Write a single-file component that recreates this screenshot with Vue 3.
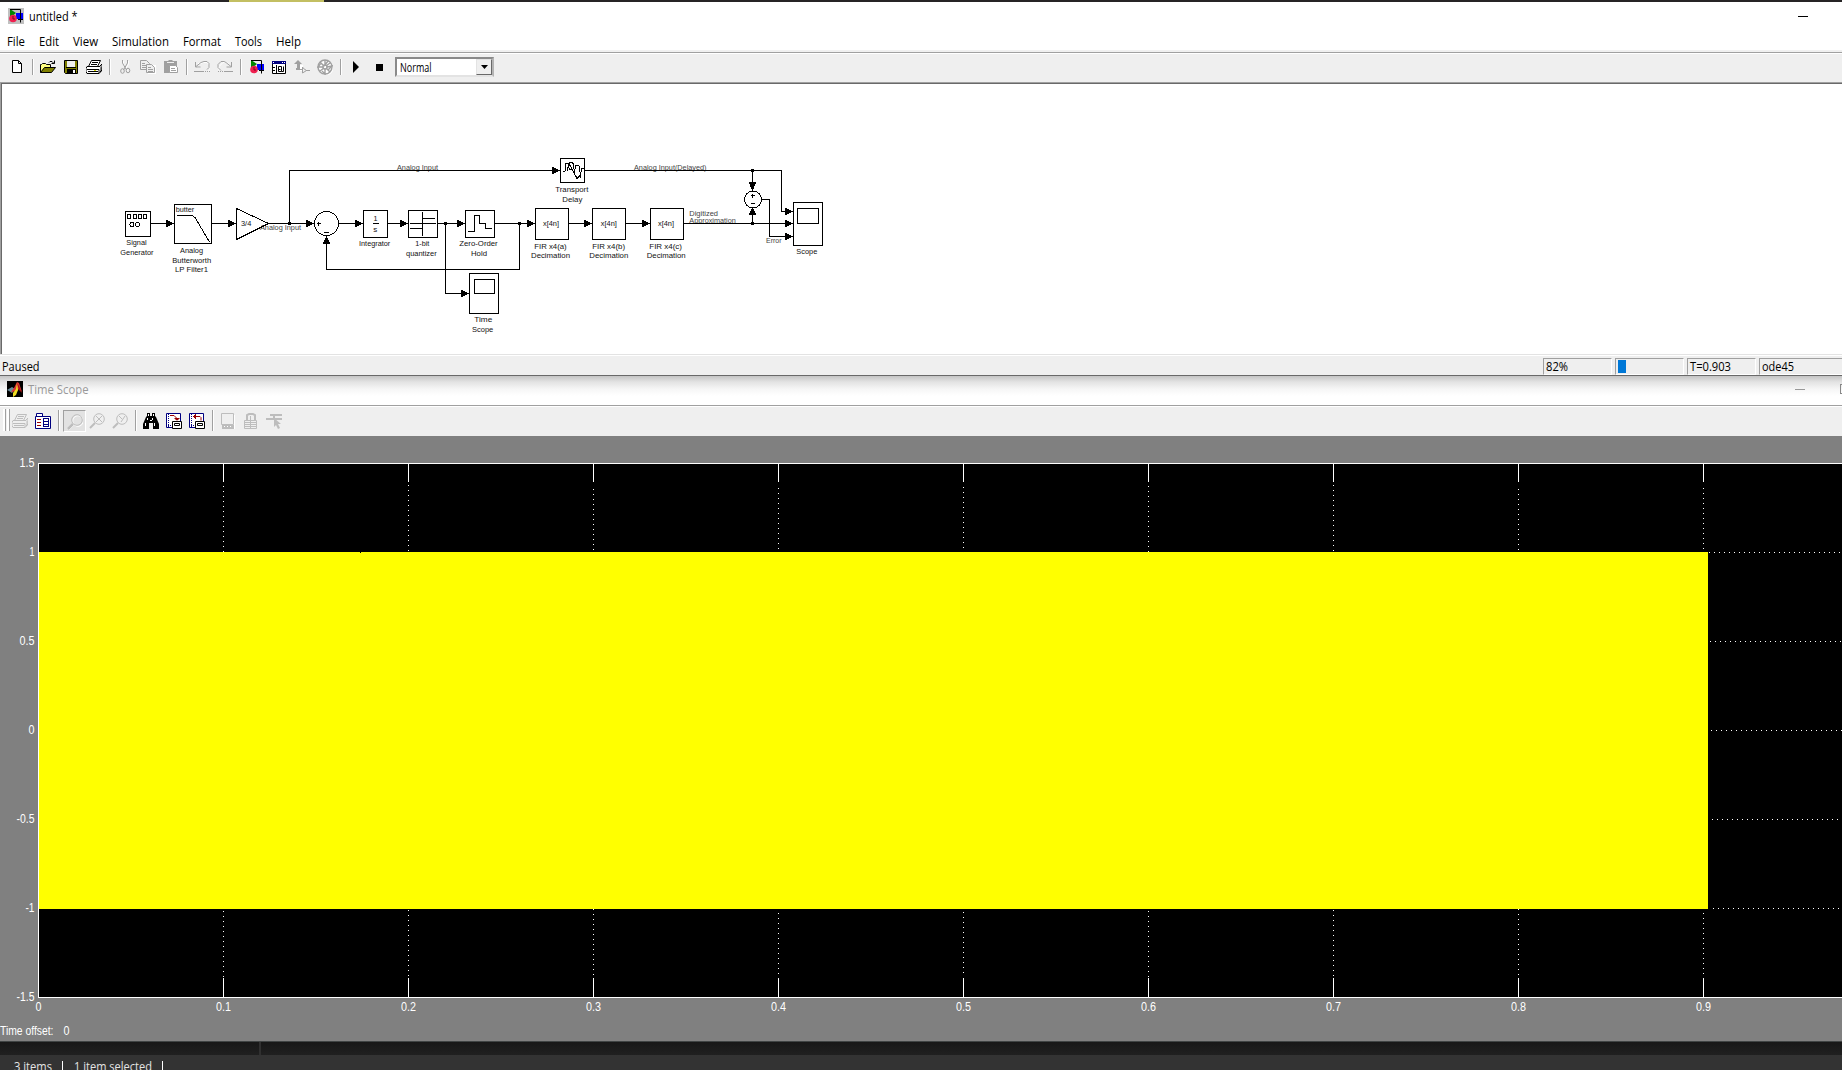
<script setup>
import { h } from 'vue'

// Text run set to an exact advance width; y is the baseline within a 16px line
const Fit = ({ t, w, size = 12, color = '#000' }) =>
  h('svg', { width: w, height: 18, style: 'display:block;overflow:visible' }, [
    h('text', { x: 0, y: 13, textLength: w, lengthAdjust: 'spacingAndGlyphs', 'font-size': size, fill: color }, t),
  ])
Fit.props = ['t', 'w', 'size', 'color']

const menus = [
  ['File', 18, 32], ['Edit', 20, 34], ['View', 25, 39], ['Simulation', 57, 71],
  ['Format', 38, 52], ['Tools', 27, 41], ['Help', 25, 30],
]

const g = '#a0a0a0'
const l = '#bdbdbd'
const icons = {
  model: `<path fill="#080" d="M2 1v9l6-5z"/><path fill="#00f" d="M8 5h7v6h-7z"/><path stroke="#000" fill="none" d="M2 1.500h10.500v13M10 11.500h5"/><circle cx="5" cy="10.500" r="3.800" fill="#f02050"/><path stroke="#800020" fill="none" d="M5 8v3h2"/>`,
  new: `<path fill="#fff" stroke="#000" d="M3.500 1.500h6l3 3v9h-9z"/><path fill="none" stroke="#000" d="M9.500 1.500v3h3"/>`,
  open: `<path fill="#ffff80" stroke="#000" d="M.5 13.500v-8h1l1-1h3l1 1h4v3"/><path fill="#808000" stroke="#000" d="M.5 13.500l4-5h11l-4 5z"/><path fill="none" stroke="#000" d="M9 3.500l1-1h2l2 2M14.500 1.500v3h-3"/>`,
  save: `<path fill="#808000" stroke="#000" d="M1.500 1.500h13v13h-12l-1-1z"/><path fill="#efefef" d="M4 2h8v6h-8z"/><path fill="#000" d="M4 10h9v5h-9zM3 8h10v1h-10z"/><path fill="#fff" d="M10 11h2v3h-2z"/>`,
  print: `<path fill="#fff" stroke="#000" d="M5.500 1.500h9l-3 6h-9z"/><path fill="#fff" stroke="#000" d="M1 7.500h13l1 1v4l-2 2h-12l-1-2v-3z"/><path stroke="#000" fill="none" d="M6 3.500h6M5 5.500h6M1 10.500h12v4M2 12.500h10M13 8l3-3v6l-2 2"/><path fill="#dd0" d="M8 11h2v1h-2z"/>`,
  cut: `<g fill="none" stroke="#fff" transform="translate(1 1)"><path d="M5.500 1v3l4 7M10.500 1v3l-4 7"/></g><g fill="none" stroke="${g}"><path d="M5.500 1v3l4 7M10.500 1v3l-4 7"/><ellipse cx="5.500" cy="12" rx="1.800" ry="2.300"/><ellipse cx="11" cy="11.500" rx="1.800" ry="2.300"/></g>`,
  copy: `<path fill="#fff" d="M8 6h8v9h-8z"/><g fill="#efefef" stroke="${g}"><path d="M.5 1.500h6l3 3v6h-9z"/><path d="M6.500 5.500h5l3 3v5h-8z"/><path d="M2 4.500h3M2 6.500h4M2 8.500h4M8 8.500h3M8 10.500h5M8 12.500h5"/></g>`,
  paste: `<path fill="${g}" d="M1 2h4l1-1h3l1 1h4v12h-13z"/><path fill="#efefef" d="M4 3h7v1h-7z"/><path fill="#fff" stroke="${g}" d="M6.500 6.500h6l2 2v5h-8z"/><path stroke="${g}" d="M8 9.500h4M8 11.500h5"/>`,
  undo: `<path fill="none" stroke="#fff" d="M3 8.500h3M4 4.500h3l2-1h4l3 3v4l-2 2"/><path fill="none" stroke="${g}" d="M1.500 3v5h5M2 7.500l5-4 3-1h3l2 2v4l-2 2"/><path fill="none" stroke="${g}" d="M0 12.500h9"/><path fill="none" stroke="${g}" stroke-dasharray="1 1" d="M9 12.500h7"/>`,
  redo: `<path fill="none" stroke="#fff" d="M2 11.500v-4l4-4h4l4 4"/><path fill="none" stroke="${g}" d="M14.500 3v5h-5M14 7.500l-5-4-2-1h-3l-3 3v3l3 3"/><path fill="none" stroke="${g}" stroke-dasharray="1 1" d="M1 12.500h7"/><path fill="none" stroke="${g}" d="M8 12.500h8"/>`,
  browser: `<path fill="#fff" stroke="#000" d="M1.500 3.500h13v11h-13z"/><path fill="#000080" d="M1 2h14v3h-14z"/><path fill="#fff" d="M2 3h1v1h-1zM11 3h1v1h-1zM13 3h1v1h-1z"/><path fill="none" stroke="#000" d="M5.500 6v8M2 8.500h2M2 11.500h2M7.500 7.500h3v5h-3zM7.500 10.500h2M12.500 7.500v5h-2"/>`,
  up: `<path fill="#fff" d="M6 6h3v6h-3z"/><path fill="${g}" d="M4 1l4 4h-2v6h-4v-2h1v-4h-3z"/><path fill="none" stroke="${g}" d="M5 10.500h4M12 11.500h4M8.500 8v6l4-2.500-3-2z"/>`,
  debug: `<circle cx="9" cy="9" r="7" fill="#fff" stroke="#fff"/><g fill="none" stroke="${g}" stroke-width="1.400"><circle cx="8" cy="8" r="7"/><circle cx="8" cy="8" r="2"/><path d="M8 1v5l3-4M10 8l5-1-4 4M8 10v5l-3-3M6 8h-5l3-4M3 3l4 4M13 13l-4-4M3 12l4-3M13 4l-4 3"/></g>`,
  play: `<path fill="#000" d="M5 2l6 6-6 6z"/>`,
  stop: `<path fill="#000" d="M5 5h7v7h-7z"/>`,
  printOff: `<g fill="#efefef" stroke="${l}"><path d="M5.500 1.500h9l-3 6h-9z"/><path d="M1 7.500h13l1 1v4l-2 2h-12l-1-2v-3z"/><path fill="none" d="M6 3.500h6M5 5.500h6M1 10.500h12v4M2 12.500h10M13 8l3-3v6l-2 2"/></g>`,
  params: `<path fill="#fff" stroke="#000080" d="M.5 15.500v-12h1v-3h6v3h8v12z"/><path stroke="#000080" fill="none" d="M1 3.500h7M8.500 5.500h5"/><path stroke="#900" d="M2 6.500h4M2 9.500h4M2 12.500h4"/><path stroke="#000080" fill="none" d="M8.500 5v9M9 8.500h4M9 11.500h4M9 13.500h4M13.500 5v9"/>`,
  zoom: `<g fill="none" stroke="#fff" transform="translate(1 1)"><circle cx="10" cy="6" r="5.300"/><path d="M6 10l-5 5"/></g><g fill="none" stroke="${l}"><circle cx="10" cy="6" r="5.300"/><path stroke-width="2.500" d="M6 10l-5 5"/></g>`,
  zoomX: `<g fill="none" stroke="${l}"><circle cx="10" cy="6" r="5.300"/><path stroke-width="2" d="M6 10l-5 5"/><path d="M7 3l6 6M13 3l-6 6"/></g>`,
  zoomY: `<g fill="none" stroke="${l}"><circle cx="10" cy="6" r="5.300"/><path stroke-width="2" d="M6 10l-5 5"/><path d="M7 3l3 3M13 3l-4 6"/></g>`,
  find: `<path fill="#000" d="M4 0h3v3h2v-3h3v3l1 1 3 7v5h-6v-6h-4v6h-6v-5l3-7 1-1z"/><path fill="#fff" d="M5 1h1v2h-1zM10 1h1v2h-1zM4 5h1v2h-1zM9 5h1v2h-1zM2 10h1v3h-1zM11 10h1v3h-1zM7 7h2v1h-2z"/>`,
  saveAxes: `<path fill="#fff" stroke="#000080" d="M.5.5h14v14h-14z"/><path fill="none" stroke="#000080" stroke-dasharray="1 1" d="M2.500 1v13M2 12.500h12"/><path fill="none" stroke="#900" d="M4 2.500h4l3 3v2M8.500 5.500h5M9.500 6.500h3"/><path fill="#fff" stroke="#000" d="M6.500 8.500h9v7h-9z"/><path fill="none" stroke="#000" d="M8.500 10.500h5v2h-5z"/>`,
  loadAxes: `<path fill="#fff" stroke="#000080" d="M.5.5h14v14h-14z"/><path fill="none" stroke="#000080" stroke-dasharray="1 1" d="M2.500 1v13M2 12.500h12"/><path fill="none" stroke="#900" d="M4 3.500h7l1 1v3M6.500 1v5M5.500 2v3"/><path fill="#fff" stroke="#000" d="M6.500 8.500h9v7h-9z"/><path fill="none" stroke="#000" d="M8.500 10.500h5v2h-5z"/>`,
  floating: `<path fill="#fff" d="M3 2h12v14h-12z"/><path fill="#efefef" stroke="${l}" d="M1.500.5h12v11h-12z"/><path fill="${l}" d="M2 12h12v4h-12z"/><path fill="#fff" d="M4 13h1v1h-1zM7 13h1v1h-1zM10 13h1v1h-1z"/>`,
  lock: `<path fill="none" stroke="${l}" stroke-width="2" d="M4 8v-6l2-1h4l2 1v6"/><path fill="#efefef" stroke="${l}" d="M1.500 7.500h12v8h-12z"/><path stroke="${l}" d="M2 9.500h12M2 11.500h12M2 13.500h12M7.500 3v12"/>`,
  signal: `<path fill="none" stroke="${l}" stroke-width="2" d="M4 2h12M0 6h16M8 2v4"/><path fill="${l}" d="M8 5l7 6h-3l2 4-2 1-2-4-2 2z"/>`,
  matlab: `<path fill="#000" d="M0 0h16v16h-16z"/><path fill="#6a8a98" d="M0 9l5-3 3 2-3 4-3-2z"/><path fill="#d33" d="M4 11l3-4 3-6 2 1 3 9-3-3-2 2z"/><path fill="#ed2" d="M6 12l3-4 1-6 1 7-2 5-3 2z"/><path fill="#a11" d="M10 2l2 3 3 7-3-3z"/>`,
}
const mainBar = ['new', '|', 'open', 'save', 'print', '|', 'cut', 'copy', 'paste', '|', 'undo', 'redo', '|', 'model', 'browser', 'up', 'debug', '|', 'play', 'stop']
const scopeBar = ['printOff', 'params', '|', 'zoom', 'zoomX', 'zoomY', '|', 'find', 'saveAxes', 'loadAxes', '|', 'floating', 'lock', 'signal']

// Blocks: x, y, width, height
const boxes = [
  [125.5, 211.5, 25, 25], [174.5, 204.5, 37, 39], [363.5, 210.5, 24, 27], [408.5, 210.5, 29, 27],
  [465.5, 210.5, 29, 27], [469.5, 273.5, 29, 40], [535.5, 208.5, 33, 31], [592.5, 208.5, 33, 31],
  [650.5, 208.5, 33, 31], [793.5, 202.5, 29, 43], [560.5, 158.5, 24, 24],
  [474.5, 279.5, 20, 14], [797.5, 208.5, 21, 15],
]
const wires = 'M151 223.5h20M212 223.500h20M268 223.500h42M289.500 223v-52.500h270M339 223.500h20M388 223.500h16M438 223.500h22M445.500 223v70.500h20M495 223.500h36M519.500 223v46.500h-193v-30M569 223.500h20M626 223.500h20M684 223.500h105M585 170.500h196.500v41h8M752.500 170v16M752.500 223v-12M762 199.500h7.500v37h20'
const heads = [[174, 223.5], [236, 223.5], [314, 223.5], [363, 223.5], [408, 223.5], [465, 223.5], [535, 223.5], [592, 223.5], [650, 223.5], [793, 223.5], [793, 211.5], [793, 236.5], [469, 293.5], [560, 170.5]]
const dots = [[288, 222], [444, 222], [518, 222], [751, 169], [751, 222]]

// Captions: text, x, baseline, width
const captions = [
  ['butter', 175.7, 212, 18.6], ['3/4', 241, 226, 10.3],
  ['1', 373.5, 221, 4], ['s', 373.2, 232, 4],
  ['x[4n]', 543, 226, 16], ['x[4n]', 600.8, 226, 16], ['x[4n]', 658, 226, 16],
  ['Signal', 126.3, 245, 20.3], ['Generator', 120.3, 255, 33.2],
  ['Analog', 180, 253, 23], ['Butterworth', 172.3, 263, 38.8], ['LP Filter1', 175, 272, 33],
  ['Integrator', 359, 246, 31.3], ['1-bit', 415.3, 246, 14], ['quantizer', 406, 256, 30.7],
  ['Zero-Order', 459.3, 246, 38.4], ['Hold', 471, 256, 16],
  ['Time', 474.3, 322, 18], ['Scope', 472, 332, 21.3],
  ['FIR x4(a)', 534.3, 249, 32.4], ['Decimation', 531, 258, 39],
  ['FIR x4(b)', 592.3, 249, 32.7], ['Decimation', 589.3, 258, 39],
  ['FIR x4(c)', 649.3, 249, 32.7], ['Decimation', 646.7, 258, 39],
  ['Scope', 796.3, 254, 21], ['Transport', 555.3, 192, 33], ['Delay', 562.3, 202, 20],
]
const signals = [
  ['Analog Input', 260, 230, 41], ['Analog Input', 397, 170, 41], ['Analog Input(Delayed)', 634, 170, 72.5],
  ['Digitized', 689.3, 215.5, 28.7], ['Approximation', 689.3, 223, 46.5], ['Error', 766, 243, 15.5],
]

const xTicks = [1, 2, 3, 4, 5, 6, 7, 8, 9].map(n => ({ n, x: 38 + n * 185, start: 485 + (((2 - n) % 5) + 5) % 5 }))
const yTicks = [['1', 552], ['0.5', 641], ['0', 730], ['-0.5', 819], ['-1', 908]].map(([t, y], i) => ({ t, y, start: 1709 + i }))
const yLabels = [['1.5', 463, 15], ['1', 552, 5], ['0.5', 641, 15], ['0', 730, 6], ['-0.5', 819, 18], ['-1', 908, 9], ['-1.5', 997, 18]]
</script>

<template>
  <div class="desktop">
    <div class="backdrop"><i></i></div>

    <section class="window">
      <header class="title">
        <span class="app-icon"><svg width="16" height="16" v-html="icons.model" /></span>
        <Fit t="untitled *" :w="48.500" />
        <i class="minimize"></i>
      </header>
      <nav class="menu">
        <span v-for="m in menus" :key="m[0]" :style="{ width: m[2] + 'px' }"><Fit :t="m[0]" :w="m[1]" /></span>
      </nav>
      <div class="toolbar main">
        <template v-for="(b, i) in mainBar" :key="i">
          <i v-if="b === '|'" class="sep"></i>
          <span v-else class="tool" :class="{ nudge: b === 'model' }"><svg width="16" height="16" v-html="icons[b]" /></span>
        </template>
        <div class="combo">
          <Fit t="Normal" :w="31.500" />
          <span class="drop"><svg width="7" height="4"><path d="M0 0h7L3.500 4z" /></svg></span>
        </div>
      </div>

      <div class="canvas">
        <svg width="1840" height="270" viewBox="2 84 1840 270">
          <defs>
            <clipPath id="above"><path d="M2 84h1840v86h-1840zM2 171h1840v52h-1840zM250 224h100v20h-100zM750 224h100v30h-100z" /></clipPath>
          </defs>
          <g class="ink" clip-path="url(#above)">
            <text v-for="(s, i) in signals" :key="i" class="signal" :x="s[1]" :y="s[2]" :textLength="s[3]" lengthAdjust="spacingAndGlyphs">{{ s[0] }}</text>
          </g>
          <g class="ink">
            <rect v-for="(b, i) in boxes" :key="i" :x="b[0]" :y="b[1]" :width="b[2]" :height="b[3]" />
            <path :d="wires" />
            <path d="M236.500 208.500v31l32-16z" />
            <circle cx="326.500" cy="223.500" r="12" />
            <circle cx="753" cy="199.500" r="8.500" />
            <path d="M127.500 214.500h3v4h-3zM133.500 214.500h3v4h-3zM138.500 214.500h3v4h-3zM143.500 214.500h3v4h-3z" />
            <circle cx="132" cy="224.500" r="2" /><circle cx="137.500" cy="224.500" r="2" />
            <path d="M177 215.500h15l3 2 14.500 24.500" />
            <path d="M316.500 223.500h4M318.500 221.500v4M324 232.500h5M751 195.500h4M752.500 193.500v4M751 203.500h4" />
            <path d="M373 223.500h6" />
            <path d="M422.500 212v24M410 223.500h26M422 218.500h13M410 228.500h12" />
            <path d="M468 231.500h6.500v-16h5v8h6v5h6.500" />
            <path d="M563 171.500h2l1-8h3l8 15 3-3 2-7h2M567 171l2-8 3-1 2 3-1 4-3 1-2-4M574 173l2-8 3 1 2 12" />
          </g>
          <g class="solid">
            <path v-for="(a, i) in heads" :key="i" :d="`M${a[0]} ${a[1]}l-8-4v8z`" />
            <path d="M326.500 236l4 8h-8zM752.500 207l4 8h-8zM752.500 191l4-9h-8z" />
            <rect v-for="(d, i) in dots" :key="i" :x="d[0]" :y="d[1]" width="3" height="3" />
          </g>
          <text v-for="(c, i) in captions" :key="i" class="caption" :x="c[1]" :y="c[2]" :textLength="c[3]" lengthAdjust="spacingAndGlyphs">{{ c[0] }}</text>
        </svg>
      </div>

      <footer class="status">
        <span class="state"><Fit t="Paused" :w="37.500" /></span>
        <span class="cell"><Fit t="82%" :w="22" /></span>
        <span class="cell"><i class="progress"></i></span>
        <span class="cell"><Fit t="T=0.903" :w="41" /></span>
        <span class="cell last"><Fit t="ode45" :w="32" /></span>
      </footer>
    </section>

    <section class="window">
      <header class="title inactive">
        <span class="app-icon"><svg width="16" height="16" v-html="icons.matlab" /></span>
        <Fit t="Time Scope" :w="60.500" color="#999" />
        <i class="minimize"></i><i class="maximize"></i>
      </header>
      <div class="toolbar scope">
        <i class="grip"></i><i class="grip"></i>
        <template v-for="(b, i) in scopeBar" :key="i">
          <i v-if="b === '|'" class="sep"></i>
          <span v-else class="tool" :class="{ pressed: b === 'zoom' }"><svg width="16" height="16" v-html="icons[b]" /></span>
        </template>
      </div>
      <svg class="plot" width="1842" height="605" viewBox="0 436 1842 605">
        <path class="screen" d="M38 463h1804v535H38z" />
        <g class="axes">
          <path d="M1842 463.500H38.500v534H1842" />
          <path v-for="t in xTicks" :key="t.n" :d="`M${t.x + 0.5} 464v18M${t.x + 0.5} 978v19`" />
          <path v-for="t in xTicks" :key="'d' + t.n" class="dotted" :d="`M${t.x + 0.5} ${t.start}V977`" />
          <path v-for="t in yTicks" :key="t.y" class="dotted" :d="`M${t.start} ${t.y + 0.5}H1842`" />
        </g>
        <path class="trace" d="M39 552h1669v357H39z" />
        <path d="M360 552h1v1h-1z" />
        <text v-for="y in yLabels" :key="y[0]" :x="34.500 - y[2]" :y="y[1] + 4" :textLength="y[2]" lengthAdjust="spacingAndGlyphs">{{ y[0] }}</text>
        <text x="35.500" y="1011" textLength="6" lengthAdjust="spacingAndGlyphs">0</text>
        <text v-for="t in xTicks" :key="'l' + t.n" :x="t.x - 7" y="1011" textLength="15" lengthAdjust="spacingAndGlyphs">0.{{ t.n }}</text>
        <text x="0" y="1035" textLength="53.500" lengthAdjust="spacingAndGlyphs">Time offset:</text>
        <text x="63.500" y="1035" textLength="6" lengthAdjust="spacingAndGlyphs">0</text>
      </svg>
    </section>

    <div class="gap"><i></i></div>
    <footer class="explorer">
      <Fit t="3 items" :w="38" color="#e4e4e4" /><i></i>
      <Fit t="1 item selected" :w="78" color="#e4e4e4" /><i></i>
    </footer>
  </div>
</template>

<style>
html, body { margin: 0; overflow: hidden; }
</style>

<style scoped>
.desktop {
  width: 1842px; height: 1070px; overflow: hidden; box-sizing: border-box;
  display: flex; flex-direction: column; background: #333;
  font-family: "Open Sans", "Noto Sans", sans-serif; font-size: 12px;
}
i { display: block; flex: none; }
.backdrop { height: 2px; background: #262425; flex: none; }
.backdrop i { width: 95px; height: 1.500px; margin-left: 229px; background: #c3bf62; }
.window { flex: none; background: #fff; }
.title { display: flex; height: 28px; padding: 0 34px 0 8px; align-items: flex-start; box-sizing: border-box; }
.title > svg { margin-top: 6px; }
.app-icon { width: 16px; height: 16px; margin: 6px 5px 0 0; background: #c0c0c0; }
.app-icon svg { display: block; }
.minimize { width: 10px; height: 1px; margin: 14px 0 0 auto; background: #000; }
.menu { display: flex; height: 20px; padding: 3px 0 0 7px; box-sizing: border-box; }
.toolbar { display: flex; background: #efefef; box-sizing: border-box; }
.toolbar svg { display: block; }
.main { height: 32px; padding: 9px 0 0 6px; background: linear-gradient(#f0f0f0 0 2px, #a0a0a0 2px 3px, #fff 3px 4px, #efefef 4px); }
.tool { width: 23px; height: 22px; padding: 0 3px; box-sizing: border-box; flex: none; }
.nudge { padding: 0 2px 0 4px; }
.sep { width: 8px; height: 16px; background: linear-gradient(90deg, transparent 3px, #a0a0a0 3px 4px, #fff 4px 5px, transparent 5px); }
.combo {
  display: flex; width: 99px; height: 20px; box-sizing: border-box; margin: -2px 0 0 4px; padding-left: 3px;
  background: #fff; border: 2px solid; border-color: #8a8a8a #b4b4b4 #e3e3e3 #8a8a8a;
}
.drop {
  display: flex; align-items: center; justify-content: center; width: 16px; height: 16px; margin-left: auto; box-sizing: border-box;
  background: #efefef; border: 1px solid; border-color: #e3e3e3 #696969 #696969 #e3e3e3;
}
.canvas { height: 272px; box-sizing: border-box; border-top: 1px solid #a0a0a0; border-left: 1px solid #a0a0a0; }
.canvas > svg { display: block; border-top: 1px solid #696969; border-left: 1px solid #696969; }
.ink { fill: none; stroke: #000; stroke-width: 1; shape-rendering: crispEdges; }
.solid { fill: #000; shape-rendering: crispEdges; }
.caption, .signal { font: 8px "Liberation Sans", Arial, sans-serif; fill: #111; stroke: none; }
.signal { font-size: 7.500px; fill: #444; }
.status { display: flex; height: 22px; box-sizing: border-box; padding-top: 4px; background: linear-gradient(#e3e3e3 0 1px, #fff 1px 2px, #efefef 2px); border-bottom: 1px solid #696969; }
.state { width: 1541px; padding-left: 2px; flex: none; }
.cell { width: 69px; height: 17px; box-sizing: border-box; margin-right: 3px; padding-left: 1.500px; flex: none; border: 1px solid; border-color: #a0a0a0 #fff #fff #a0a0a0; }
.cell > svg { margin-top: -1px; }
.last { width: 90px; }
.progress { width: 8px; height: 13px; margin-top: 1px; background: #0078d7; }
.inactive { height: 29px; padding: 0 0 0 7px; background: linear-gradient(#c4c4c4, #e3e3e3 6px, #f6f6f6 13px, #fff 20px); }
.inactive .app-icon { margin-top: 5px; }
.inactive > svg { margin-top: 5px; }
.inactive .minimize { margin-top: 13px; background: #999; }
.maximize { width: 2px; height: 10px; box-sizing: border-box; margin: 8px 0 0 35px; border: solid #888; border-width: 1px 0 1px 1px; }
.scope { height: 31px; padding: 8px 0 0 3px; background: linear-gradient(#a0a0a0 0 1px, #fff 1px 2px, #efefef 2px); }
.scope .sep { height: 21px; margin-top: -3px; }
.grip { width: 3px; height: 22px; margin: -4px 1px 0 0; box-sizing: border-box; background: #fff; border-right: 1px solid #a0a0a0; }
.grip + .grip { margin-right: -1px; }
.pressed { margin-top: -3px; padding: 3px 0 0 3px; background: #e2e2e2; border: 1px solid; border-color: #a0a0a0 #fff #fff #a0a0a0; }
.plot { display: block; background: #808080; }
.plot text { font: 12px "Liberation Sans", Arial, sans-serif; fill: #fff; }
.axes { fill: none; stroke: #fff; stroke-width: 1; shape-rendering: crispEdges; }
.dotted { stroke-dasharray: 1 4; }
.trace { fill: #ff0; }
.gap { flex: none; height: 14px; box-sizing: border-box; border-top: 1px solid #404444; background: linear-gradient(#171717, #202020); }
.gap i { width: 2px; height: 13px; margin-left: 259px; background: #303030; }
.explorer { flex: none; display: flex; height: 15px; box-sizing: border-box; padding: 3px 0 0 14px; }
.explorer i { width: 1px; height: 12px; margin: 3px 10.500px 0 10px; background: #fff; }
</style>
